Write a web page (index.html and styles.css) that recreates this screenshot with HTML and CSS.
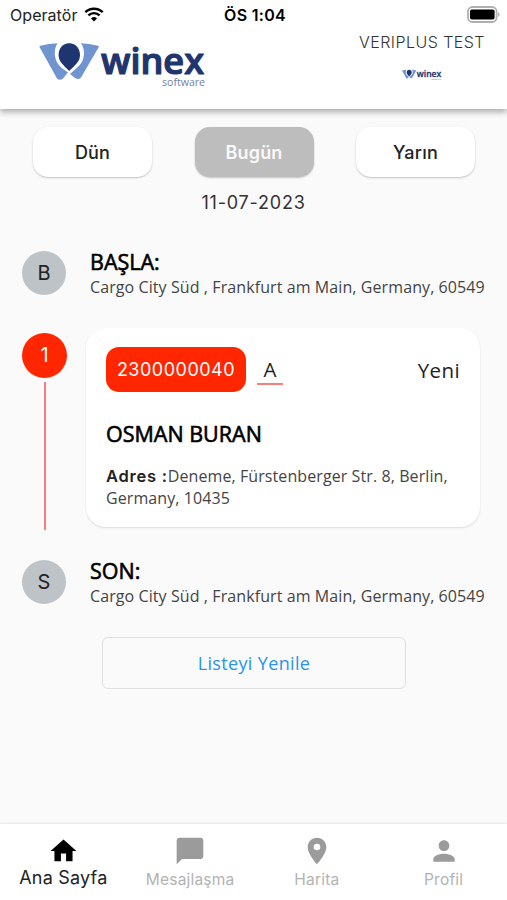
FILE: index.html
```html
<!DOCTYPE html>
<html lang="tr">
<head>
    <meta charset="UTF-8">
    <meta name="viewport" content="width=device-width, initial-scale=1.0">
    <title>Winex</title>
    <link rel="stylesheet" href="styles.css">
</head>
<body>
    <div class="app">
        <header class="header">
            <div class="status-bar">
                <span class="carrier">Operatör
                    <svg class="wifi" viewBox="0 0 20 15" width="20" height="15">
                        <path d="M1.3 5.2a12.5 12.5 0 0 1 17.4 0M4.4 8.4a8 8 0 0 1 11.2 0" fill="none" stroke="#000" stroke-width="2.4"/>
                        <path d="M10 14.6l-3-3.1a4.3 4.3 0 0 1 6 0z"/>
                    </svg>
                </span>
                <b class="time">ÖS 1:04</b>
                <svg class="battery" viewBox="0 0 33 17" width="33" height="17">
                    <rect x="1" y="1" width="28.6" height="15" rx="4.4" fill="#fff" stroke="#b0b0b0" stroke-width="1.8"/>
                    <rect x="3" y="3.4" width="24.6" height="10.2" rx="1.8"/>
                    <path d="M31.2 6v5q1.4-.8 1.4-2.5T31.2 6z" fill="#aaa"/>
                </svg>
            </div>
            <div class="brand-row">
                <svg class="logo" viewBox="0 0 168 50" width="168" height="50">
                    <g id="winex-logo">
                        <path d="M.5 7Q.3 6.200 1.300 5.800Q10 3.500 18.500 3.300C15.500 8 15 14 17 20C19 25.500 23 28.500 29 32.300L24 38.500Q21 41 18 38.500Z" fill="#7094cf"/>
                        <path d="M59.800 7Q60 6.200 59 5.800Q50 3.500 41.900 3.300C45.200 8 46 14 43.800 20C42 25 37 28.500 31 34L36 38Q39.500 40.300 42 37.500Z" fill="#7094cf"/>
                        <path d="M30.200 3.300C37 3.300 41 8.500 41 15C41 22 35.500 25.500 30.200 31C25 25.500 19.600 22 19.600 15C19.600 8.500 23.500 3.300 30.200 3.300Z" fill="#1f3570"/>
                        <text class="logo-name" x="62" y="33.500" textLength="103" lengthAdjust="spacingAndGlyphs">winex</text>
                        <text class="logo-sub" x="123" y="45.700" textLength="43" lengthAdjust="spacingAndGlyphs">software</text>
                    </g>
                </svg>
                <div class="company">
                    <span class="company-name">VERIPLUS TEST</span>
                    <svg class="company-logo" viewBox="0 0 168 50" width="40" height="12"><use href="#winex-logo"/></svg>
                </div>
            </div>
        </header>

        <main class="content">
            <div class="days">
                <button class="day">Dün</button>
                <button class="day active">Bugün</button>
                <button class="day">Yarın</button>
            </div>
            <div class="date"><span>11-07-2023</span></div>

            <div class="stop first">
                <span class="circle">B</span>
                <div class="stop-info">
                    <h3 class="stop-title">BAŞLA:</h3>
                    <p class="address">Cargo City Süd , Frankfurt am Main, Germany, 60549</p>
                </div>
            </div>

            <div class="job">
                <div class="job-track">
                    <span class="circle red">1</span>
                    <span class="line"></span>
                </div>
                <div class="card">
                    <div class="card-top">
                        <span class="job-no">2300000040</span>
                        <span class="type">A</span>
                        <span class="state">Yeni</span>
                    </div>
                    <h3 class="customer">OSMAN BURAN</h3>
                    <p class="card-address"><b>Adres :</b>Deneme, Fürstenberger Str. 8, Berlin,<br>Germany, 10435</p>
                </div>
            </div>

            <div class="stop last">
                <span class="circle">S</span>
                <div class="stop-info">
                    <h3 class="stop-title">SON:</h3>
                    <p class="address">Cargo City Süd , Frankfurt am Main, Germany, 60549</p>
                </div>
            </div>

            <button class="refresh">Listeyi Yenile</button>
        </main>

        <nav class="tabs">
            <a class="tab active">
                <svg viewBox="0 0 24 24" width="31" height="32"><path d="M10 20v-6h4v6h5v-8h3L12 3 2 12h3v8z"/></svg>
                <span>Ana Sayfa</span>
            </a>
            <a class="tab">
                <svg viewBox="0 0 24 24" width="32" height="32"><path d="M20 2H4c-1.100 0-2 .9-2 2v18l4-4h14c1.100 0 2-.9 2-2V4c0-1.100-.9-2-2-2z"/></svg>
                <span>Mesajlaşma</span>
            </a>
            <a class="tab">
                <svg viewBox="0 0 24 24" width="32" height="32"><path d="M12 2C8.130 2 5 5.130 5 9c0 5.250 7 13 7 13s7-7.750 7-13c0-3.870-3.130-7-7-7zm0 9.500a2.500 2.500 0 0 1 0-5 2.500 2.500 0 0 1 0 5z"/></svg>
                <span>Harita</span>
            </a>
            <a class="tab">
                <svg viewBox="0 0 24 24" width="32" height="32"><path d="M12 12c2.210 0 4-1.790 4-4s-1.790-4-4-4-4 1.790-4 4 1.790 4 4 4zm0 2c-2.670 0-8 1.340-8 4v2h16v-2c0-2.660-5.330-4-8-4z"/></svg>
                <span>Profil</span>
            </a>
        </nav>
    </div>
</body>
</html>
```
FILE: styles.css
```css
* {
    box-sizing: border-box;
}

body {
    margin: 0;
    font-family: "Inter", sans-serif;
    background-color: #fafafa;
    color: #222;
}

h3, p {
    margin: 0;
}

button {
    font-family: inherit;
    padding: 0;
}

.app {
    display: flex;
    flex-direction: column;
    height: 900px;
    overflow: hidden;
}

.header {
    height: 109px;
    background-color: #fff;
    box-shadow: 0 3px 6px rgba(0, 0, 0, .32);
}

.status-bar {
    display: grid;
    grid-template-columns: 1fr auto 1fr;
    align-items: center;
    height: 29px;
    padding: 0 7px 0 10px;
}

.carrier {
    display: flex;
    align-items: center;
    gap: 7px;
    font-size: 16px;
    letter-spacing: .05px;
}

.time {
    font-size: 16px;
    font-weight: 600;
    letter-spacing: .3px;
    color: #000;
}

.battery {
    justify-self: end;
}

.brand-row {
    display: flex;
    justify-content: space-between;
    padding: 1px 23px 0 39px;
}

.logo {
    margin-top: 10px;
    overflow: visible;
}

.logo-name {
    font-family: "Open Sans", sans-serif;
    font-size: 36px;
    font-weight: 600;
    fill: #1f3570;
    stroke: #1f3570;
    stroke-width: 1.2px;
    stroke-linejoin: round;
}

.logo-sub {
    font-family: "Open Sans", sans-serif;
    font-size: 10px;
    font-weight: 500;
    fill: #7580a5;
}

.company {
    display: flex;
    flex-direction: column;
    align-items: center;
    padding-top: 2px;
}

.company-name {
    font-size: 16px;
    font-weight: 300;
    line-height: 20px;
    letter-spacing: .45px;
    margin-right: -1px;
    color: #333;
}

.company-logo {
    margin: 17px 0 0;
    overflow: visible;
}

.content {
    flex: 1;
    padding-top: 18px;
}

.days {
    display: flex;
    justify-content: space-between;
    padding: 0 32px 0 33px;
}

.day {
    width: 119px;
    height: 50px;
    border: 0;
    border-radius: 15px;
    background-color: #fff;
    color: #222;
    font-size: 18px;
    font-weight: 500;
    letter-spacing: .2px;
    box-shadow: 0 1px 2px rgba(0, 0, 0, .22);
}

.day.active {
    background-color: #bdbdbd;
    color: #fafafa;
    font-weight: 600;
}

.date {
    height: 50px;
    line-height: 51px;
    text-align: center;
    font-size: 18px;
    letter-spacing: .8px;
    color: #333;
}

.stop {
    display: flex;
    gap: 24px;
    padding-left: 22px;
}

.stop.first {
    margin-top: 22px;
}

.stop.last {
    margin-top: 28px;
}

.circle {
    flex: none;
    width: 44px;
    height: 44px;
    margin-top: 2px;
    border-radius: 50%;
    background-color: #bdc3c7;
    text-align: center;
    line-height: 44px;
    font-size: 20px;
}

.circle.red {
    width: 45px;
    height: 45px;
    margin-top: 5px;
    line-height: 45px;
    background-color: #ff2600;
    color: #fff;
}

.stop-info {
    font-family: "Open Sans", sans-serif;
    white-space: nowrap;
}

.stop-title, .customer {
    font-family: "Open Sans", sans-serif;
    font-size: 21.5px;
    font-weight: 400;
    line-height: 25px;
    color: #000;
    -webkit-text-stroke: .6px #000;
}

.address {
    font-size: 16px;
    line-height: 27px;
    height: 25px;
    letter-spacing: .09px;
    color: #444;
}

.job {
    display: flex;
    gap: 19px;
    height: 202px;
    margin-top: 29px;
    padding-left: 22px;
}

.job-track {
    display: flex;
    flex-direction: column;
    align-items: center;
}

.line {
    flex: 1;
    width: 2px;
    margin-top: 4px;
    background-color: #f57f7b;
}

.card {
    width: 394px;
    height: 199px;
    padding: 19px 20px;
    border-radius: 20px;
    background-color: #fff;
    box-shadow: 0 1px 2px rgba(0, 0, 0, .13);
}

.card-top {
    display: flex;
    align-items: flex-start;
}

.job-no {
    width: 140px;
    height: 45px;
    border-radius: 13px;
    background-color: #ff2600;
    color: #fff;
    text-align: center;
    line-height: 45px;
    font-size: 18px;
    letter-spacing: .5px;
}

.type {
    width: 26px;
    height: 38px;
    margin-left: 11px;
    border-bottom: 2px solid #f57f7b;
    text-align: center;
    line-height: 45px;
    font-family: "Open Sans", sans-serif;
    font-size: 20.5px;
}

.state {
    margin-left: auto;
    line-height: 46px;
    font-family: "Open Sans", sans-serif;
    font-size: 20.5px;
    letter-spacing: .4px;
}

.customer {
    margin-top: 28px;
}

.card-address {
    margin-top: 20px;
    font-family: "Open Sans", sans-serif;
    font-size: 16px;
    line-height: 21.5px;
    letter-spacing: .09px;
    white-space: nowrap;
    color: #444;
}

.card-address b {
    font-family: "Inter", sans-serif;
    font-size: 16.5px;
    font-weight: 600;
    letter-spacing: .75px;
    color: #222;
}

.refresh {
    display: block;
    width: 304px;
    height: 52px;
    margin: 29px 0 0 102px;
    border: 1.5px solid #e0e0e0;
    border-radius: 6px;
    background-color: transparent;
    color: #2b93e8;
    font-family: "Open Sans", sans-serif;
    font-size: 18px;
    letter-spacing: .35px;
}

.tabs {
    display: flex;
    height: 76px;
    background-color: #fff;
    box-shadow: 0 -1px 2px rgba(0, 0, 0, .08);
}

.tab {
    flex: 1;
    display: flex;
    flex-direction: column;
    align-items: center;
    padding-top: 11px;
    color: #b3b3b3;
    font-size: 15.5px;
    line-height: 26px;
    letter-spacing: .2px;
}

.tab svg {
    fill: #9b9b9b;
}

.tab.active {
    color: #222;
    font-size: 18px;
    line-height: 22px;
}

.tab.active svg {
    fill: #000;
}
```
